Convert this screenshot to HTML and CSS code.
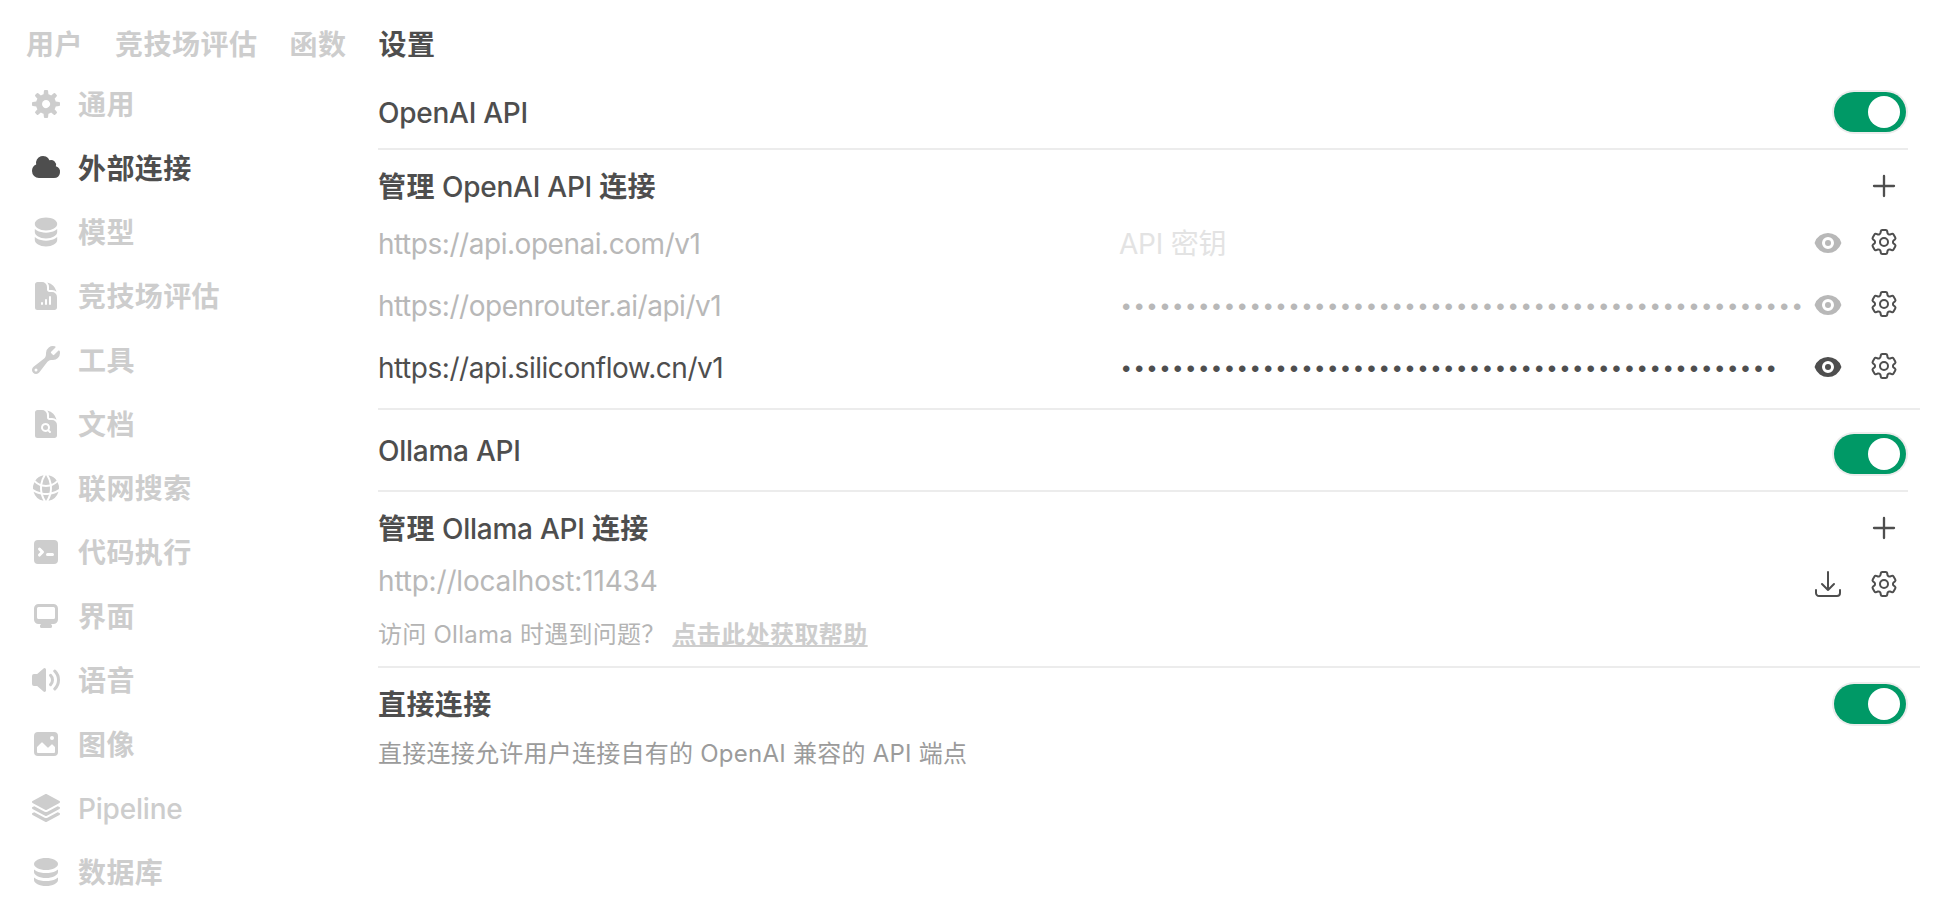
FILE: index.html
```html
<!DOCTYPE html>
<html lang="zh-CN">
<head>
    <meta charset="UTF-8">
    <meta name="viewport" content="width=device-width, initial-scale=1.0">
    <title>设置</title>
    <link rel="stylesheet" href="styles.css">
</head>
<body>
    <!-- shared icons -->
    <svg class="sprite" width="0" height="0">
        <symbol id="icon-eye" viewBox="0 0 16 16">
            <path d="M8 9.5a1.5 1.5 0 1 0 0-3 1.5 1.5 0 0 0 0 3Z"/>
            <path fill-rule="evenodd" d="M1.38 8.28a.87.87 0 0 1 0-.566 7.003 7.003 0 0 1 13.238.006.87.87 0 0 1 0 .566A7.003 7.003 0 0 1 1.379 8.28ZM11 8a3 3 0 1 1-6 0 3 3 0 0 1 6 0Z"/>
        </symbol>
        <symbol id="icon-cog" viewBox="0 0 24 24">
            <path d="M9.594 3.94c.09-.542.56-.94 1.11-.94h2.593c.55 0 1.02.398 1.11.94l.213 1.281c.063.374.313.686.645.87.074.04.147.083.22.127.324.196.72.257 1.075.124l1.217-.456a1.125 1.125 0 0 1 1.37.49l1.296 2.247a1.125 1.125 0 0 1-.26 1.431l-1.003.827c-.293.24-.438.613-.431.992a6.759 6.759 0 0 1 0 .255c-.007.378.138.75.43.99l1.005.828c.424.35.534.954.26 1.43l-1.298 2.247a1.125 1.125 0 0 1-1.369.491l-1.217-.456c-.355-.133-.75-.072-1.076.124a6.57 6.57 0 0 1-.22.128c-.331.183-.581.495-.644.869l-.213 1.28c-.09.543-.56.941-1.11.941h-2.594c-.55 0-1.02-.398-1.11-.94l-.213-1.281c-.062-.374-.312-.686-.644-.87a6.52 6.52 0 0 1-.22-.127c-.325-.196-.72-.257-1.076-.124l-1.217.456a1.125 1.125 0 0 1-1.369-.49l-1.297-2.247a1.125 1.125 0 0 1 .26-1.431l1.004-.827c.292-.24.437-.613.43-.992a6.932 6.932 0 0 1 0-.255c.007-.378-.138-.75-.43-.99l-1.004-.828a1.125 1.125 0 0 1-.26-1.43l1.297-2.247a1.125 1.125 0 0 1 1.37-.491l1.216.456c.356.133.751.072 1.076-.124.072-.044.146-.087.22-.128.332-.183.582-.495.644-.869l.214-1.281Z"/>
            <path d="M15 12a3 3 0 1 1-6 0 3 3 0 0 1 6 0Z"/>
        </symbol>
        <symbol id="icon-plus" viewBox="0 0 24 24">
            <path d="M12 4.5v15m7.5-7.5h-15"/>
        </symbol>
        <symbol id="icon-download" viewBox="0 0 24 24">
            <path d="M3 16.5v2.25A2.25 2.25 0 0 0 5.25 21h13.5A2.25 2.25 0 0 0 21 18.75V16.5M16.5 12 12 16.5m0 0L7.5 12m4.5 4.5V3"/>
        </symbol>
    </svg>

    <nav class="tabs">
        <a>用户</a>
        <a>竞技场评估</a>
        <a>函数</a>
        <a class="active">设置</a>
    </nav>

    <div class="layout">
        <aside class="sidebar">
            <a class="item">
                <svg class="icon" viewBox="0 0 16 16"><path fill-rule="evenodd" d="M6.955 1.45A.5.5 0 0 1 7.452 1h1.096a.5.5 0 0 1 .497.45l.17 1.699c.484.12.94.312 1.356.562l1.321-1.081a.5.5 0 0 1 .67.033l.774.775a.5.5 0 0 1 .034.67l-1.08 1.32c.25.417.44.873.561 1.357l1.699.17a.5.5 0 0 1 .45.497v1.096a.5.5 0 0 1-.45.497l-1.699.17c-.12.484-.312.94-.562 1.356l1.082 1.322a.5.5 0 0 1-.034.67l-.774.774a.5.5 0 0 1-.67.033l-1.322-1.08c-.416.25-.872.44-1.356.561l-.17 1.699a.5.5 0 0 1-.497.45H7.452a.5.5 0 0 1-.497-.45l-.17-1.699a4.973 4.973 0 0 1-1.356-.562L4.108 13.37a.5.5 0 0 1-.67-.033l-.774-.775a.5.5 0 0 1-.034-.67l1.08-1.32a4.971 4.971 0 0 1-.561-1.357l-1.699-.17A.5.5 0 0 1 1 8.548V7.452a.5.5 0 0 1 .45-.497l1.699-.17c.12-.484.312-.94.562-1.356L2.629 4.107a.5.5 0 0 1 .034-.67l.774-.774a.5.5 0 0 1 .67-.033L5.43 3.71a4.97 4.97 0 0 1 1.356-.561l.17-1.699ZM6 8c0 .538.212 1.026.558 1.385l.057.057a2 2 0 0 0 2.828-2.828l-.058-.056A2 2 0 0 0 6 8Z"/></svg>
                <span>通用</span>
            </a>
            <a class="item active">
                <svg class="icon" viewBox="0 0 16 16"><path d="M1 9.5A3.5 3.5 0 0 0 4.5 13H12a3 3 0 0 0 .917-5.857 2.503 2.503 0 0 0-3.198-3.019 3.5 3.5 0 0 0-6.628 2.171A3.5 3.5 0 0 0 1 9.5Z"/></svg>
                <span>外部连接</span>
            </a>
            <a class="item">
                <svg class="icon" viewBox="0 0 20 20"><path fill-rule="evenodd" d="M10 1c3.866 0 7 1.79 7 4s-3.134 4-7 4-7-1.79-7-4 3.134-4 7-4Zm5.694 8.13c.464-.264.91-.583 1.306-.952V10c0 2.21-3.134 4-7 4s-7-1.79-7-4V8.178c.396.37.842.688 1.306.953C5.838 10.006 7.854 10.5 10 10.5s4.162-.494 5.694-1.37ZM3 13.179V15c0 2.21 3.134 4 7 4s7-1.79 7-4v-1.822c-.396.37-.842.688-1.306.953-1.532.875-3.548 1.369-5.694 1.369s-4.162-.494-5.694-1.37A7.009 7.009 0 0 1 3 13.179Z"/></svg>
                <span>模型</span>
            </a>
            <a class="item">
                <svg class="icon" viewBox="0 0 24 24"><path fill-rule="evenodd" d="M5.625 1.5H9a3.75 3.75 0 0 1 3.75 3.75v1.875c0 1.036.84 1.875 1.875 1.875H16.5a3.75 3.75 0 0 1 3.75 3.75v7.875c0 1.035-.84 1.875-1.875 1.875H5.625a1.875 1.875 0 0 1-1.875-1.875V3.375c0-1.036.84-1.875 1.875-1.875ZM9.75 17.25a.75.75 0 0 0-1.5 0V18a.75.75 0 0 0 1.5 0v-.75Zm2.25-3a.75.75 0 0 1 .75.75v3a.75.75 0 0 1-1.5 0v-3a.75.75 0 0 1 .75-.75Zm3.75-1.5a.75.75 0 0 0-1.5 0V18a.75.75 0 0 0 1.5 0v-5.25Z"/><path d="M14.25 5.25a5.23 5.23 0 0 0-1.279-3.434 9.768 9.768 0 0 1 6.963 6.963A5.23 5.23 0 0 0 16.5 7.5h-1.875a.375.375 0 0 1-.375-.375V5.25Z"/></svg>
                <span>竞技场评估</span>
            </a>
            <a class="item">
                <svg class="icon" viewBox="0 0 16 16"><path fill-rule="evenodd" d="M15 4.5A3.5 3.5 0 0 1 11.435 8c-.99-.019-2.093.132-2.7.913l-4.13 5.31a2.015 2.015 0 1 1-2.827-2.828l5.309-4.13c.78-.607.932-1.71.914-2.7L8 4.5a3.5 3.5 0 0 1 4.477-3.362c.325.094.39.497.15.736L10.6 3.902a.48.48 0 0 0-.033.653c.271.314.565.608.879.879a.48.48 0 0 0 .653-.033l2.027-2.027c.239-.24.642-.175.736.15.09.31.138.637.138.976ZM3.75 13a.75.75 0 1 1-1.5 0 .75.75 0 0 1 1.5 0Z"/></svg>
                <span>工具</span>
            </a>
            <a class="item">
                <svg class="icon" viewBox="0 0 24 24"><path d="M11.625 16.5a1.875 1.875 0 1 0 0-3.75 1.875 1.875 0 0 0 0 3.75Z"/><path fill-rule="evenodd" d="M5.625 1.5H9a3.75 3.75 0 0 1 3.75 3.75v1.875c0 1.036.84 1.875 1.875 1.875H16.5a3.75 3.75 0 0 1 3.75 3.75v7.875c0 1.035-.84 1.875-1.875 1.875H5.625a1.875 1.875 0 0 1-1.875-1.875V3.375c0-1.036.84-1.875 1.875-1.875Zm6 16.5c.66 0 1.277-.19 1.797-.518l1.048 1.048a.75.75 0 0 0 1.06-1.06l-1.047-1.048A3.375 3.375 0 1 0 11.625 18Z"/><path d="M14.25 5.25a5.23 5.23 0 0 0-1.279-3.434 9.768 9.768 0 0 1 6.963 6.963A5.23 5.23 0 0 0 16.5 7.5h-1.875a.375.375 0 0 1-.375-.375V5.25Z"/></svg>
                <span>文档</span>
            </a>
            <a class="item">
                <svg class="icon" viewBox="0 0 24 24"><path d="M21.721 12.752a9.711 9.711 0 0 0-.945-5.003 12.754 12.754 0 0 1-4.339 2.708 18.991 18.991 0 0 1-.214 4.772 17.165 17.165 0 0 0 5.498-2.477ZM14.634 15.55a17.324 17.324 0 0 0 .332-4.647c-.952.227-1.945.347-2.966.347-1.021 0-2.014-.12-2.966-.347a17.515 17.515 0 0 0 .332 4.647 17.385 17.385 0 0 0 5.268 0ZM9.772 17.119a18.963 18.963 0 0 0 4.456 0A17.182 17.182 0 0 1 12 21.724a17.18 17.18 0 0 1-2.228-4.605ZM7.777 15.23a18.87 18.87 0 0 1-.214-4.774 12.753 12.753 0 0 1-4.34-2.708 9.711 9.711 0 0 0-.944 5.004 17.165 17.165 0 0 0 5.498 2.477ZM21.356 14.752a9.765 9.765 0 0 1-7.478 6.817 18.64 18.64 0 0 0 1.988-4.718 18.627 18.627 0 0 0 5.49-2.098ZM2.644 14.752c1.682.971 3.53 1.688 5.49 2.099a18.64 18.64 0 0 0 1.988 4.718 9.765 9.765 0 0 1-7.478-6.816ZM13.878 2.43a9.755 9.755 0 0 1 6.116 3.986 11.267 11.267 0 0 1-3.746 2.504 18.63 18.63 0 0 0-2.37-6.49ZM12 2.276a17.152 17.152 0 0 1 2.805 7.121c-.897.23-1.837.353-2.805.353-.968 0-1.908-.122-2.805-.353A17.151 17.151 0 0 1 12 2.276ZM10.122 2.43a18.629 18.629 0 0 0-2.37 6.49 11.266 11.266 0 0 1-3.746-2.504 9.754 9.754 0 0 1 6.116-3.985Z"/></svg>
                <span>联网搜索</span>
            </a>
            <a class="item">
                <svg class="icon" viewBox="0 0 16 16"><path fill-rule="evenodd" d="M2 4a2 2 0 0 1 2-2h8a2 2 0 0 1 2 2v8a2 2 0 0 1-2 2H4a2 2 0 0 1-2-2V4Zm2.22 1.97a.75.75 0 0 0 0 1.06l.97.97-.97.97a.75.75 0 1 0 1.06 1.06l1.5-1.5a.75.75 0 0 0 0-1.06l-1.5-1.5a.75.75 0 0 0-1.06 0ZM8.75 8.5a.75.75 0 0 0 0 1.5h2.5a.75.75 0 0 0 0-1.5h-2.5Z"/></svg>
                <span>代码执行</span>
            </a>
            <a class="item">
                <svg class="icon" viewBox="0 0 16 16"><path fill-rule="evenodd" d="M2 4.25A2.25 2.25 0 0 1 4.25 2h7.5A2.25 2.25 0 0 1 14 4.25v5.5A2.25 2.25 0 0 1 11.75 12h-1.312c.1.128.21.248.328.36a.75.75 0 0 1 .234.545v.345a.75.75 0 0 1-.75.75h-4.5a.75.75 0 0 1-.75-.75v-.345a.75.75 0 0 1 .234-.545c.118-.111.228-.232.328-.36H4.25A2.25 2.25 0 0 1 2 9.75v-5.5Zm2.25-.75a.75.75 0 0 0-.75.75v4.5c0 .414.336.75.75.75h7.5a.75.75 0 0 0 .75-.75v-4.5a.75.75 0 0 0-.75-.75h-7.5Z"/></svg>
                <span>界面</span>
            </a>
            <a class="item">
                <svg class="icon" viewBox="0 0 16 16"><path d="M7.557 2.066A.75.75 0 0 1 8 2.75v10.5a.75.75 0 0 1-1.248.56L3.59 11H2a1 1 0 0 1-1-1V6a1 1 0 0 1 1-1h1.59l3.162-2.81a.75.75 0 0 1 .805-.124ZM12.95 3.05a.75.75 0 1 0-1.06 1.06 5.5 5.5 0 0 1 0 7.78.75.75 0 1 0 1.06 1.06 7 7 0 0 0 0-9.9Z"/><path d="M10.828 5.172a.75.75 0 1 0-1.06 1.06 2.5 2.5 0 0 1 0 3.536.75.75 0 1 0 1.06 1.06 4 4 0 0 0 0-5.656Z"/></svg>
                <span>语音</span>
            </a>
            <a class="item">
                <svg class="icon" viewBox="0 0 16 16"><path fill-rule="evenodd" d="M2 4a2 2 0 0 1 2-2h8a2 2 0 0 1 2 2v8a2 2 0 0 1-2 2H4a2 2 0 0 1-2-2V4Zm10.5 5.707a.5.5 0 0 0-.146-.353l-1-1a.5.5 0 0 0-.708 0L9.354 9.646a.5.5 0 0 1-.708 0L6.354 7.354a.5.5 0 0 0-.708 0l-2 2a.5.5 0 0 0-.146.353V12a.5.5 0 0 0 .5.5h8a.5.5 0 0 0 .5-.5V9.707ZM12 5a1 1 0 1 1-2 0 1 1 0 0 1 2 0Z"/></svg>
                <span>图像</span>
            </a>
            <a class="item">
                <svg class="icon" viewBox="0 0 24 24"><path d="M11.644 1.59a.75.75 0 0 1 .712 0l9.75 5.25a.75.75 0 0 1 0 1.32l-9.75 5.25a.75.75 0 0 1-.712 0l-9.75-5.25a.75.75 0 0 1 0-1.32l9.75-5.25Z"/><path d="m3.265 10.602 7.668 4.129a2.25 2.25 0 0 0 2.134 0l7.668-4.13 1.37.739a.75.75 0 0 1 0 1.32l-9.75 5.25a.75.75 0 0 1-.71 0l-9.75-5.25a.75.75 0 0 1 0-1.32l1.37-.738Z"/><path d="m10.933 19.231-7.668-4.13-1.37.739a.75.75 0 0 0 0 1.32l9.75 5.25c.221.12.489.12.71 0l9.75-5.25a.75.75 0 0 0 0-1.32l-1.37-.738-7.668 4.13a2.25 2.25 0 0 1-2.134-.001Z"/></svg>
                <span class="latin">Pipeline</span>
            </a>
            <a class="item">
                <svg class="icon" viewBox="0 0 16 16"><path d="M8 7c3.314 0 6-1.343 6-3s-2.686-3-6-3-6 1.343-6 3 2.686 3 6 3Z"/><path d="M8 8.5c1.84 0 3.579-.37 4.914-1.037A6.33 6.33 0 0 0 14 6.78V8c0 1.657-2.686 3-6 3S2 9.657 2 8V6.78c.346.273.72.5 1.087.683C4.42 8.131 6.16 8.5 8 8.5Z"/><path d="M8 12.5c1.84 0 3.579-.37 4.914-1.037.366-.183.74-.41 1.086-.684V12c0 1.657-2.686 3-6 3s-6-1.343-6-3v-1.22c.346.273.72.5 1.087.683C4.42 12.131 6.16 12.5 8 12.5Z"/></svg>
                <span>数据库</span>
            </a>
        </aside>

        <main class="content">
            <section>
                <div class="row">
                    <span class="title">OpenAI API</span>
                    <button class="switch"></button>
                </div>
                <hr>
                <div class="row manage">
                    <span class="title"><b>管理</b> OpenAI API <b>连接</b></span>
                    <svg class="icon line plus"><use href="#icon-plus"/></svg>
                </div>
                <div class="connection disabled">
                    <span class="url">https://api.openai.com/v1</span>
                    <span class="key placeholder">API 密钥</span>
                    <svg class="icon eye"><use href="#icon-eye"/></svg>
                    <svg class="icon line"><use href="#icon-cog"/></svg>
                </div>
                <div class="connection disabled">
                    <span class="url">https://openrouter.ai/api/v1</span>
                    <span class="key dots">•••••••••••••••••••••••••••••••••••••••••••••••••••••</span>
                    <svg class="icon eye"><use href="#icon-eye"/></svg>
                    <svg class="icon line"><use href="#icon-cog"/></svg>
                </div>
                <div class="connection">
                    <span class="url">https://api.siliconflow.cn/v1</span>
                    <span class="key dots">•••••••••••••••••••••••••••••••••••••••••••••••••••</span>
                    <svg class="icon eye"><use href="#icon-eye"/></svg>
                    <svg class="icon line"><use href="#icon-cog"/></svg>
                </div>
            </section>

            <hr class="wide">

            <section>
                <div class="row ollama">
                    <span class="title">Ollama API</span>
                    <button class="switch"></button>
                </div>
                <hr>
                <div class="row manage">
                    <span class="title"><b>管理</b> Ollama API <b>连接</b></span>
                    <svg class="icon line plus"><use href="#icon-plus"/></svg>
                </div>
                <div class="connection local disabled">
                    <span class="url">http://localhost:11434</span>
                    <svg class="icon line"><use href="#icon-download"/></svg>
                    <svg class="icon line"><use href="#icon-cog"/></svg>
                </div>
                <p class="help">访问 Ollama 时遇到问题？<a>点击此处获取帮助</a></p>
            </section>

            <hr class="wide">

            <section>
                <div class="row">
                    <span class="title"><b>直接连接</b></span>
                    <button class="switch"></button>
                </div>
                <p class="note">直接连接允许用户连接自有的 OpenAI 兼容的 API 端点</p>
            </section>
        </main>
    </div>
</body>
</html>
```
FILE: styles.css
```css
* {
    box-sizing: border-box;
    margin: 0;
    padding: 0;
}

body {
    background: #fff;
    color: #4e4e4e;
    font-family: Inter, "Noto Sans CJK SC", sans-serif;
    font-size: 28px;
    line-height: 40px;
    height: 904px;
    overflow: hidden;
}

.sprite {
    display: block;
}

.icon {
    width: 32px;
    height: 32px;
    flex-shrink: 0;
    fill: currentColor;
}

.icon.line {
    fill: none;
    stroke: #4e4e4e;
    stroke-width: 1.5;
    stroke-linecap: round;
    stroke-linejoin: round;
}

.icon.plus {
    stroke-width: 1.75;
}

.tabs {
    display: flex;
    gap: 32px;
    height: 72px;
    padding: 25px 26px 7px;
    color: #cdcdcd;
    font-weight: 700;
    letter-spacing: 0.5px;
}

.tabs .active,
.item.active {
    color: #4e4e4e;
}

.layout {
    display: flex;
}

.sidebar {
    width: 378px;
    padding-left: 30px;
    color: #cdcdcd;
    font-weight: 700;
    letter-spacing: 0.4px;
}

.item {
    display: flex;
    align-items: center;
    gap: 16px;
    height: 64px;
}

.item span {
    padding-top: 1px;
}

.item .latin {
    font-weight: 500;
    letter-spacing: -0.2px;
}

.content {
    width: 1542px;
    padding-top: 4px;
}

section {
    width: 1530px;
}

hr {
    border: none;
    height: 2px;
    background: #ececec;
}

hr.wide {
    margin-top: 10px;
}

.row {
    display: flex;
    align-items: center;
    justify-content: space-between;
    height: 72px;
}

.title {
    padding-top: 1px;
    font-weight: 500;
    letter-spacing: -0.25px;
}

.title b {
    font-weight: 700;
    letter-spacing: 0.4px;
}

.row.manage {
    height: 62px;
    padding: 10px 8px 0 0;
}

.row.ollama {
    height: 80px;
    padding-top: 8px;
}

.row.ollama .title {
    margin-top: -8px;
}

.switch {
    width: 72px;
    height: 40px;
    margin-right: 2px;
    padding: 4px 6px 4px 4px;
    border: none;
    border-radius: 20px;
    background: #009966;
    box-shadow: 0 0 0 2px #ececec;
}

.switch::after {
    content: "";
    display: block;
    width: 32px;
    height: 32px;
    margin-left: auto;
    border-radius: 50%;
    background: #fff;
}

.connection {
    display: grid;
    grid-template-columns: 741px 681px 32px 32px;
    align-items: center;
    height: 62px;
}

.connection .eye {
    margin-left: 12px;
}

.connection .line {
    margin-left: 36px;
    margin-top: -2px;
}

.url {
    padding-top: 1px;
    letter-spacing: -0.46px;
}

.disabled .url,
.disabled .dots,
.disabled .eye {
    color: #b8b8b8;
}

.placeholder {
    padding-top: 1px;
    color: #e3e3e3;
    letter-spacing: -0.2px;
}

.dots {
    padding: 3px 0 0 3px;
    font-family: "Liberation Sans", sans-serif;
    font-size: 24px;
    letter-spacing: 4.5px;
    white-space: nowrap;
}

.connection.local {
    display: flex;
    gap: 24px;
    height: 60px;
    padding-right: 8px;
}

.local .url {
    flex: 1;
    margin-top: -8px;
    letter-spacing: -0.18px;
}

.local .line {
    margin: 0;
}

.help,
.note {
    font-size: 24px;
    letter-spacing: 0.25px;
}

.help {
    height: 42px;
    line-height: 42px;
    color: #b4b4b4;
}

.help a {
    margin-left: 7px;
    color: #cdcdcd;
    font-weight: 700;
    letter-spacing: 0.4px;
    text-decoration: underline;
}

.note {
    line-height: 27px;
    color: #9b9b9b;
}
```
